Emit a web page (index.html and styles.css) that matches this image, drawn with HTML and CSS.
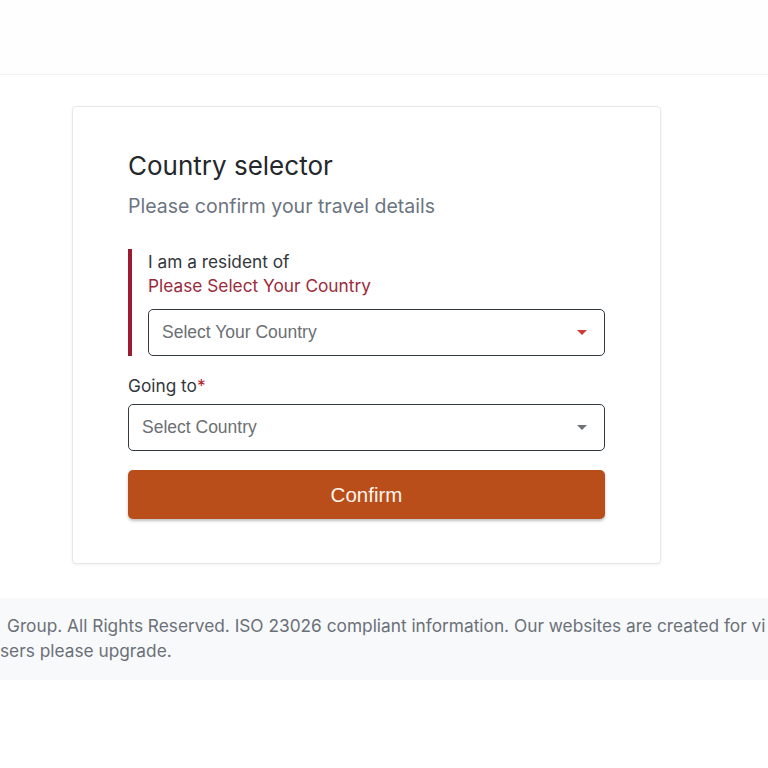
FILE: index.html
```html
<!DOCTYPE html>
<html>
<head>
<meta charset="utf-8">
<link rel="stylesheet" href="styles.css">
</head>
<body>
<header class="top"></header>
<main class="main">
  <section class="card">
    <h1 class="title">Country selector</h1>
    <p class="subtitle">Please confirm your travel details</p>
    <div class="field field-error">
      <label class="label">I am a resident of</label>
      <div class="error">Please Select Your Country</div>
      <div class="select">
        <span class="placeholder">Select Your Country</span>
        <span class="caret caret-red"></span>
      </div>
    </div>
    <div class="field">
      <label class="label">Going to<span class="req">*</span></label>
      <div class="select">
        <span class="placeholder">Select Country</span>
        <span class="caret"></span>
      </div>
    </div>
    <button class="btn">Confirm</button>
  </section>
</main>
<footer class="footer">
  <div class="line">Group. All Rights Reserved. ISO 23026 compliant information. Our websites are created for vi</div>
  <div class="line line2">sers please upgrade.</div>
</footer>
</body>
</html>
```
FILE: styles.css
```css
html, body {
  margin: 0;
  padding: 0;
  background: #ffffff;
  font-family: Inter, "Noto Sans", sans-serif;
  overflow: hidden;
}
.top {
  height: 74px;
  border-bottom: 1px solid #f1f2f3;
  background: #fefefe;
}
.main {
  padding: 31px 0 34px 72px;
}
.card {
  width: 477px;
  padding: 42px 55px 44px 55px;
  border: 1px solid #e6e8ea;
  border-radius: 4px;
  box-shadow: 0 1px 3px rgba(0,0,0,0.06);
  background: #fff;
}
.title {
  margin: 0;
  font-size: 26px;
  line-height: 34px;
  font-weight: 400;
  color: #24272b;
}
.subtitle {
  margin: 9px 0 0 0;
  font-size: 19.5px;
  line-height: 28px;
  color: #6b7480;
}
.field {
  margin-top: 18px;
}
.field-error {
  margin-top: 29px;
  border-left: 4px solid #9b1b30;
  padding-left: 16px;
}
.label {
  display: block;
  font-size: 17.3px;
  line-height: 24px;
  color: #33373c;
}
.field-error .label {
  line-height: 25px;
}
.req {
  color: #b0232f;
}
.error {
  font-size: 17.3px;
  line-height: 24px;
  color: #9b2a3b;
  margin-bottom: 11px;
}
.field .label + .select {
  margin-top: 6px;
}
.select {
  height: 45px;
  border: 1px solid #343a42;
  border-radius: 5px;
  display: flex;
  align-items: center;
  justify-content: space-between;
  padding: 0 17px 0 13px;
  font-family: "Liberation Sans", Arial, sans-serif;
  font-size: 17.5px;
  color: #6c6f73;
}
.caret {
  width: 0;
  height: 0;
  border-left: 5px solid transparent;
  border-right: 5px solid transparent;
  border-top: 5px solid #6e7276;
}
.caret-red {
  border-top-color: #d03a3a;
}
.btn {
  display: block;
  width: 100%;
  margin-top: 19px;
  height: 49px;
  border: none;
  border-radius: 5px;
  background: #b94e1b;
  color: #fff5ee;
  font-family: "Liberation Sans", Arial, sans-serif;
  font-size: 20.5px;
  font-weight: 400;
  box-shadow: 0 2px 3px rgba(0,0,0,0.25);
}
.footer {
  background: #f7f9fa;
  padding: 15px 0 17px 0;
  font-size: 17.3px;
  line-height: 25px;
  color: #6b7078;
}
.line {
  white-space: nowrap;
  overflow: hidden;
  padding-left: 7px;
}
.line2 {
  padding-left: 0;
}
```
